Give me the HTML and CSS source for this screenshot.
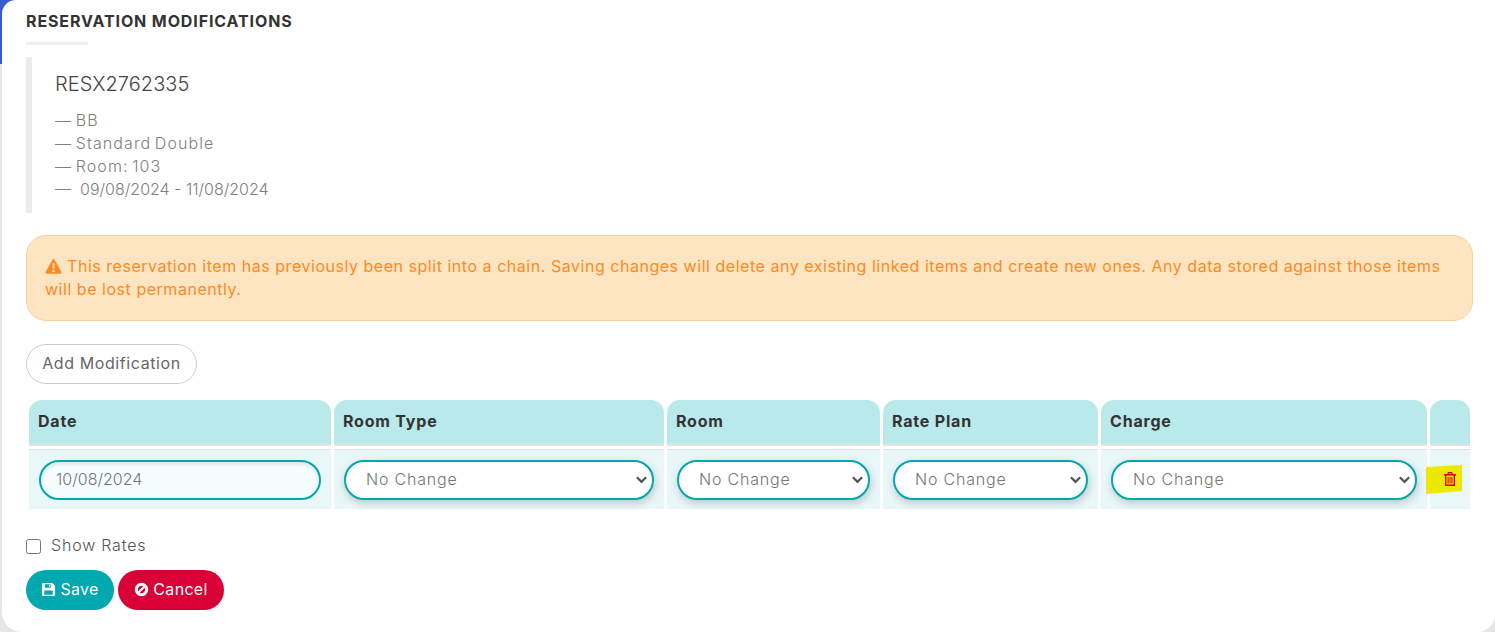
FILE: index.html
```html
<!DOCTYPE html>
<html lang="en">
<head>
<meta charset="utf-8">
<title>Reservation Modifications</title>
<link rel="stylesheet" href="styles.css">
</head>
<body>
<div class="accent"></div>
<main class="panel">
  <h2 class="title">RESERVATION MODIFICATIONS</h2>
  <div class="rule"></div>
  <section class="quote">
    <div class="code">RESX2762335</div>
    <ul class="details">
      <li>— BB</li>
      <li>— Standard Double</li>
      <li>— Room: 103</li>
      <li class="dates">—&nbsp; 09/08/2024 - 11/08/2024</li>
    </ul>
  </section>
  <div class="alert">
    <svg class="alert-icon" viewBox="0 0 16 16"><path fill="currentColor" fill-rule="evenodd" d="M8 1c.5 0 .9.3 1.100.7l6.200 11.200c.5.9-.1 2-1.100 2H1.800c-1 0-1.600-1.100-1.100-2L6.900 1.700C7.100 1.300 7.500 1 8 1zM7 5l.3 5h1.400L9 5H7zm1 6.200a1.100 1.100 0 1 0 0 2.200 1.100 1.100 0 0 0 0-2.200z"/></svg>
    This reservation item has previously been split into a chain. Saving changes will delete any existing linked items and create new ones. Any data stored against those items will be lost permanently.
  </div>
  <button class="add-btn" type="button">Add Modification</button>
  <table class="mods">
    <thead>
      <tr>
        <th class="c-date">Date</th>
        <th class="c-type">Room Type</th>
        <th class="c-room">Room</th>
        <th class="c-rate">Rate Plan</th>
        <th class="c-charge">Charge</th>
        <th class="c-del"></th>
      </tr>
    </thead>
    <tbody>
      <tr>
        <td><input class="field date" type="text" value="10/08/2024"></td>
        <td><select class="field pick"><option>No Change</option></select></td>
        <td><select class="field pick"><option>No Change</option></select></td>
        <td><select class="field pick"><option>No Change</option></select></td>
        <td><select class="field pick"><option>No Change</option></select></td>
        <td class="del-cell">
          <span class="highlight"></span>
          <svg class="trash" viewBox="0 0 12 14"><path fill="#d90000" fill-rule="evenodd" d="M4 0h4l.8 2H12v1.500h-1V14H1V3.500H0V2h3.200L4 0zm.8 1.200L4.500 2h3l-.3-.8H4.800zM2.400 3.500v9.100h7.200V3.500H2.400z"/><path fill="#d90000" d="M3.600 5h1v6.500h-1zM5.500 5h1v6.500h-1zM7.400 5h1v6.500h-1z"/></svg>
        </td>
      </tr>
    </tbody>
  </table>
  <label class="rates"><input type="checkbox" class="check"><span>Show Rates</span></label>
  <div class="actions">
    <button class="btn save" type="button">
      <svg class="btn-icon" viewBox="0 0 16 16"><path fill="currentColor" fill-rule="evenodd" d="M2.500 1H12l3 3v9.500c0 .8-.7 1.500-1.500 1.500h-11C1.700 15 1 14.300 1 13.500v-11C1 1.700 1.700 1 2.500 1zM4 2.500V6h6.500V2.500H4zm4.500.5h1.300v2.300H8.500V3zM3.500 9v4.500h9V9h-9z"/></svg>Save
    </button>
    <button class="btn cancel" type="button">
      <svg class="btn-icon" viewBox="0 0 16 16"><path fill="currentColor" fill-rule="evenodd" d="M8 .8a7.200 7.200 0 1 1 0 14.400A7.200 7.200 0 0 1 8 .8zM4.500 9.900l5.400-5.400A4 4 0 0 0 4.500 9.900zm1.600 1.600a4 4 0 0 0 5.400-5.400l-5.400 5.400z"/></svg>Cancel
    </button>
  </div>
</main>
</body>
</html>
```
FILE: styles.css
```css
* { box-sizing: border-box; }
html, body { margin: 0; height: 632px; overflow: hidden; }
body {
  position: relative;
  background: #e6e6e6;
  font-family: "Inter", "Open Sans", sans-serif;
  color: #333;
  padding-left: 2px;
}
.accent {
  position: absolute;
  left: 0; top: 0;
  width: 20px; height: 64px;
  background: #2f5fd0;
}
.panel {
  position: relative;
  background: #fff;
  height: 632px;
  width: 1493px;
  border-radius: 14px 0 18px 20px;
  padding: 12px 22px 0 24px;
}
.title {
  margin: 0;
  font-size: 16px;
  line-height: 18px;
  font-weight: 700;
  letter-spacing: .88px;
  color: #333;
}
.rule { width: 62px; height: 3px; background: #eee; margin-top: 12px; }
.quote {
  margin-top: 12px;
  height: 156px;
  border-left: 6px solid #ebebeb;
  padding: 14px 0 0 23px;
}
.code { font-size: 20px; line-height: 26px; color: #444; font-weight: 300; letter-spacing: .05px; }
.details {
  list-style: none;
  margin: 12px 0 0;
  padding: 0;
  font-size: 16px;
  line-height: 23px;
  color: #808080;
  font-weight: 300;
  letter-spacing: 1.1px;
  word-spacing: -2px;
}
.details .dates { letter-spacing: 0; word-spacing: 0; }
.alert {
  margin-top: 22px;
  height: 86px;
  background: #fde5c1;
  border: 1px solid #fdcf9f;
  border-radius: 20px;
  padding: 19px 18px 0;
  font-size: 16px;
  line-height: 23px;
  letter-spacing: .53px;
  color: #fd8a25;
}
.alert-icon { width: 17px; height: 17px; vertical-align: -3px; }
.add-btn {
  display: block;
  margin-top: 23px;
  height: 40px;
  width: 171px;
  padding: 0 0 2px;
  border: 1px solid #ccc;
  border-radius: 20px;
  background: #fff;
  font: 400 16px "Inter", sans-serif;
  letter-spacing: .6px;
  color: #666;
}
.mods {
  border-collapse: separate;
  border-spacing: 3px;
  margin-top: 13px;
  table-layout: fixed;
  width: 1444px;
}
.c-date { width: 302px; }
.c-type { width: 330px; }
.c-room { width: 213px; }
.c-rate { width: 215px; }
.c-charge { width: 326px; }
.c-del { width: 40px; }
.mods th {
  height: 46px;
  background: #b9e9ea;
  border-bottom: 2px solid #e2e2e2;
  border-radius: 13px 13px 0 0;
  text-align: left;
  padding: 0 9px 2px;
  font-size: 16px;
  font-weight: 700;
  letter-spacing: .8px;
  color: #333;
}
.mods td {
  height: 60px;
  background: #e9f7f8;
  border-top: 1px solid #dfe3e6;
  padding: 0 10px;
}
.field {
  display: block;
  width: 100%;
  height: 40px;
  border: 2px solid #00a8ae;
  border-radius: 20px;
  background-color: #fff;
  box-shadow: 1px 3px 8px rgba(0, 0, 0, .2);
  font: 300 16px "Inter", sans-serif;
  color: #777;
  padding: 0 16px 2px;
  outline: none;
}
.pick {
  appearance: none;
  -webkit-appearance: none;
  letter-spacing: .8px;
  padding: 0 30px 2px 20px;
  background-image: url("data:image/svg+xml;utf8,<svg xmlns='http://www.w3.org/2000/svg' viewBox='0 0 14 9'><path d='M2 2l5 5 5-5' fill='none' stroke='%23555' stroke-width='2.400'/></svg>");
  background-repeat: no-repeat;
  background-size: 13px 9px;
  background-position: right 4px center;
}
.date { background: #f5fdff; box-shadow: inset 0 2px 4px rgba(0,0,0,.12); padding: 0 15px 2px; }
.mods td.del-cell { position: relative; padding: 0 0 4px; text-align: center; }
.highlight {
  position: absolute;
  left: -4px; top: 15px;
  width: 36px; height: 29px;
  background: #ece800;
  clip-path: polygon(0 2px, 100% 0, 100% 26px, 0 100%);
}
.trash { position: relative; display: inline-block; width: 12px; height: 14px; vertical-align: middle; }
.rates {
  display: flex;
  align-items: center;
  margin-top: 21px;
  height: 24px;
  font-size: 16px;
  font-weight: 300;
  letter-spacing: .8px;
  color: #555;
}
.check { margin: 2px 10px 0 0; width: 15px; height: 15px; }
.actions { display: flex; gap: 4px; margin-top: 13px; }
.btn {
  height: 40px;
  border: 0;
  border-radius: 20px;
  color: #fff;
  font: 400 16px "Inter", sans-serif;
  letter-spacing: .3px;
  padding: 0 0 2px;
  display: flex;
  align-items: center;
  justify-content: center;
  gap: 4px;
}
.btn-icon { width: 15px; height: 15px; }
.save { width: 88px; background: #00a8b0; }
.cancel { width: 106px; background: #d80036; }
```
